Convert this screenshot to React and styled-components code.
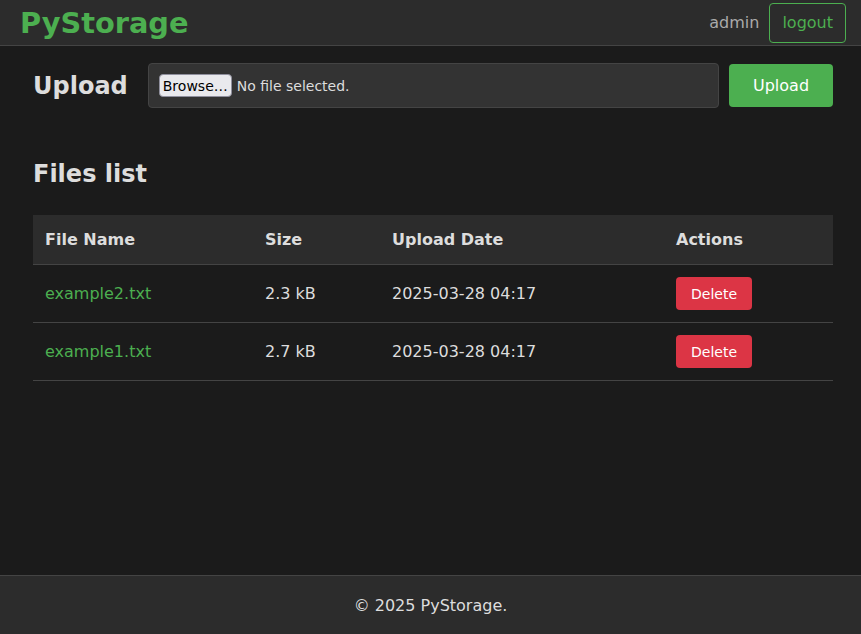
import React from "react";
import styled, { createGlobalStyle } from "styled-components";

const Global = createGlobalStyle`
  html, body { margin: 0; padding: 0; height: 100%; }
  body {
    background: #1b1b1b;
    color: #dddddd;
    font-family: "DejaVu Sans", "Liberation Sans", sans-serif;
    font-size: 16px;
  }
  #root { min-height: 100vh; display: flex; flex-direction: column; }
`;

const Header = styled.header`
  height: 45px;
  display: flex;
  align-items: center;
  justify-content: space-between;
  padding: 0 15px 0 20px;
  background: #2c2c2c;
  border-bottom: 1px solid #444;
`;

const Logo = styled.div`
  color: #4caf50;
  font-weight: bold;
  font-size: 28.8px;
`;

const Nav = styled.div`
  display: flex;
  align-items: center;
  gap: 10px;
`;

const User = styled.span`
  color: #aaaaaa;
  font-size: 16px;
`;

const Outline = styled.button`
  height: 40px;
  padding: 0 12px;
  background: transparent;
  border: 1px solid #4caf50;
  border-radius: 4px;
  color: #4caf50;
  font: inherit;
  font-size: 16px;
`;

const Main = styled.main`
  flex: 1;
  width: 800px;
  margin-left: 33px;
`;

const UploadRow = styled.form`
  display: flex;
  align-items: center;
  margin-top: 17px;
`;

const Title = styled.h2`
  margin: 0;
  font-size: 24px;
  font-weight: bold;
  color: #dddddd;
`;

const FileBox = styled.label`
  flex: 1;
  margin-left: 20px;
  height: 45px;
  box-sizing: border-box;
  display: flex;
  align-items: center;
  padding: 0 10px;
  background: #333333;
  border: 1px solid #444;
  border-radius: 4px;
  font-size: 14px;
  color: #dddddd;
  input { display: none; }
`;

const Browse = styled.span`
  display: inline-flex;
  align-items: center;
  height: 23px;
  box-sizing: border-box;
  padding: 0 3px;
  background: #e9e9ed;
  border: 1px solid #8f8f9d;
  border-radius: 4px;
  color: #000;
  margin-right: 5px;
`;

const Primary = styled.button`
  margin-left: 10px;
  width: 104px;
  height: 43px;
  background: #4caf50;
  border: none;
  border-radius: 4px;
  color: #fff;
  font: inherit;
  font-size: 16px;
`;

const ListTitle = styled(Title)`
  margin-top: 52px;
  margin-bottom: 27px;
`;

const Table = styled.table`
  width: 100%;
  border-collapse: collapse;
  table-layout: fixed;
`;

const Th = styled.th`
  text-align: left;
  background: #2c2c2c;
  padding: 15px 12px;
  font-weight: bold;
  color: #dddddd;
  border-bottom: 1px solid #444;
  width: ${(p) => (p.$w ? `${p.$w}px` : "auto")};
`;

const Td = styled.td`
  padding: 12px;
  border-bottom: 1px solid #444;
  color: #dddddd;
`;

const FileLink = styled.a`
  color: #4caf50;
  text-decoration: none;
`;

const Danger = styled.button`
  height: 33px;
  padding: 0 15px;
  background: #dc3545;
  border: none;
  border-radius: 4px;
  color: #fff;
  font: inherit;
  font-size: 14px;
`;

const Footer = styled.footer`
  height: 58px;
  display: flex;
  align-items: center;
  justify-content: center;
  background: #2c2c2c;
  border-top: 1px solid #444;
  color: #dddddd;
`;

const files = [
  { name: "example2.txt", size: "2.3 kB", date: "2025-03-28 04:17" },
  { name: "example1.txt", size: "2.7 kB", date: "2025-03-28 04:17" },
];

export default function App() {
  return (
    <>
      <Global />
      <Header>
        <Logo>PyStorage</Logo>
        <Nav>
          <User>admin</User>
          <Outline>logout</Outline>
        </Nav>
      </Header>
      <Main>
        <UploadRow onSubmit={(e) => e.preventDefault()}>
          <Title>Upload</Title>
          <FileBox>
            <input type="file" />
            <Browse>Browse…</Browse>
            No file selected.
          </FileBox>
          <Primary type="submit">Upload</Primary>
        </UploadRow>
        <ListTitle>Files list</ListTitle>
        <Table>
          <thead>
            <tr>
              <Th $w={196}>File Name</Th>
              <Th $w={103}>Size</Th>
              <Th $w={260}>Upload Date</Th>
              <Th>Actions</Th>
            </tr>
          </thead>
          <tbody>
            {files.map((f) => (
              <tr key={f.name}>
                <Td><FileLink href="#">{f.name}</FileLink></Td>
                <Td>{f.size}</Td>
                <Td>{f.date}</Td>
                <Td><Danger>Delete</Danger></Td>
              </tr>
            ))}
          </tbody>
        </Table>
      </Main>
      <Footer>© 2025 PyStorage.</Footer>
    </>
  );
}
